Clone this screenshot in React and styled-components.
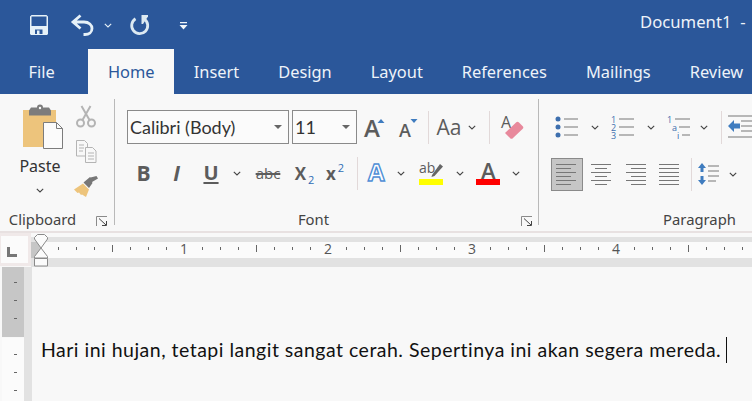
import React from 'react';
import styled, { createGlobalStyle } from 'styled-components';

const Global = createGlobalStyle`
  html, body { margin: 0; padding: 0; background: #f8f8f8; }
  body { width: 752px; height: 401px; overflow: hidden; font-family: "Noto Sans", "Open Sans", sans-serif; }
  svg { overflow: visible; }
`;
const Shell = styled.div`width: 752px; height: 401px; overflow: hidden; display: flex; flex-direction: column;`;
const TitleBar = styled.header`height: 49px; background: #2b579a; display: flex; align-items: center; flex: none;`;
const Qat = styled.div`display: flex; align-items: center; padding-left: 29px;`;
const QatIcon = styled.svg`display: block; flex: none; margin-left: ${p => p.$ml || 0}px; margin-top: ${p => p.$mt || 0}px;`;
const DocTitle = styled.div`margin-left: auto; width: 112px; overflow: hidden; white-space: pre; color: #eef3f9; font-size: 16.7px; line-height: 22px; margin-top: -5px;`;
const TabBar = styled.nav`height: 45px; background: #2b579a; display: flex; padding-left: 9px; flex: none;`;
const Tab = styled.div`
  display: flex; align-items: center; justify-content: center; flex: none; white-space: nowrap;
  font-size: 16.4px; padding: 0 19.5px; margin-right: ${p => p.$mr || 0}px; padding-bottom: 1px;
  color: ${p => p.$active ? '#2b579a' : '#eef3f9'};
  background: ${p => p.$active ? '#f8f8f8' : 'transparent'};
  ${p => p.$active ? 'width: 86px; padding: 0 0 1px;' : ''}
`;
const Ribbon = styled.section`height: 139px; flex: none; box-sizing: border-box; background: #f8f8f8; border-bottom: 2px solid #e8e1e1; padding-top: 5px; display: flex;`;
const Group = styled.div`width: ${p => p.$w}px; height: 126px; flex: none; box-sizing: border-box; border-right: 1px solid ${p => p.$noBorder ? 'transparent' : '#b9b9b9'}; display: flex; flex-direction: column;`;
const GroupBody = styled.div`height: 108px; flex: none; box-sizing: border-box; padding-left: ${p => p.$pl || 0}px; display: ${p => p.$row ? 'flex' : 'block'};`;
const GroupFoot = styled.div`height: 18px; flex: none; display: flex; align-items: center;`;
const GroupLabel = styled.div`flex: 1; text-align: center; font-size: 14.8px; line-height: 18px; color: #444; margin-top: 5px; height: 18px;`;
const Launcher = styled.svg`display: block; flex: none; margin-left: ${p => p.$ml}px; margin-top: 10px; margin-right: ${p => p.$mr}px;`;
const PasteCol = styled.div`width: 60px; margin-left: 10px; flex: none; display: flex; flex-direction: column; align-items: center;`;
const PasteIcon = styled.svg`display: block; margin-top: 5px; margin-left: 5px;`;
const PasteText = styled.div`font-size: 16px; line-height: 20px; color: #333; margin-top: 6px;`;
const SideCol = styled.div`width: 32px; flex: none; display: flex; flex-direction: column; align-items: center;`;
const SideCell = styled.div`height: 35px; display: flex; align-items: center; justify-content: center;`;
const Row = styled.div`display: flex; align-items: center; height: ${p => p.$h || 34}px; margin-top: ${p => p.$mt || 0}px;`;
const ComboBox = styled.div`
  box-sizing: border-box; width: ${p => p.$w}px; height: 34px; border: 1px solid #8a8a8a; background: #fbfbfb; flex: none;
  display: flex; align-items: center; justify-content: space-between; padding: 0 6px 0 2px; margin-right: 3px;
  font-family: Lato, "Noto Sans", sans-serif; font-size: 18px; color: #333;
`;
const Caret = styled.span`width: 0; height: 0; border-left: 4px solid transparent; border-right: 4px solid transparent; border-top: 4px solid #666;`;
const Cell = styled.div`
  width: ${p => p.$w}px; height: ${p => p.$h || 34}px; flex: none; display: flex; align-items: center; justify-content: center; box-sizing: border-box;
  ${p => p.$sel ? 'background:#c6c6c6;border:1px solid #8a8a8a;' : ''}
`;
const Sep = styled.div`width: 1px; height: 33px; background: #e2d9d9; flex: none; margin: 0 ${p => p.$r || 0}px 0 ${p => p.$l || 0}px;`;
const Letter = styled.span`
  font-family: "Open Sans", "Noto Sans", sans-serif; color: #5c5c5c; font-size: ${p => p.$size || 18}px; line-height: 1;
  font-weight: ${p => p.$bold ? 700 : 400}; font-style: ${p => p.$italic ? 'italic' : 'normal'};
  text-decoration: ${p => p.$deco || 'none'}; text-decoration-thickness: 2px; text-underline-offset: 2px;
`;
const Gap = styled.span`width: ${p => p.$w}px; flex: none;`;
const SubMark = styled.span`color: #2f6db5; font-size: 11px; line-height: 1; position: relative; top: ${p => p.$top}px; margin-left: 2px; font-family: "Open Sans", sans-serif;`;
const RulerRow = styled.div`height: 34px; flex: none; display: flex; background: #f8f8f8;`;
const Corner = styled.div`width: 31px; height: 33px; box-sizing: border-box; flex: none; background: #fbfbfb; border: 3px solid #f0e9e9; border-left-width: 1px; display: flex; align-items: center; justify-content: center; padding: 4px 5px 0 0;`;
const HRuler = styled.div`position: relative; flex: 1; margin-top: 4px; height: 30px; background: #e2e2e2; padding-top: 5px; box-sizing: border-box;`;
const HBand = styled.svg`display: block; width: 721px; height: 16px; background: #fbfbfb;`;
const IndentMark = styled.svg`position: absolute; left: 3px; top: -3px; display: block;`;
const Work = styled.div`flex: 1; display: flex; min-height: 0;`;
const VRuler = styled.div`width: 32px; flex: none; box-sizing: border-box; padding-left: 2px; border-right: 8px solid #e2e2e2; display: flex; flex-direction: column; gap: 1px; background: #f8f8f8;`;
const VBlock = styled.div`
  flex: none; height: ${p => p.$h}px; background: ${p => p.$dark ? '#c6c6c6' : '#fbfbfb'}; padding: ${p => p.$pt}px 0 0 4px; box-sizing: border-box;
  display: flex; flex-direction: column; align-items: center;
`;
const VDash = styled.div`height: 18px; flex: none; display: flex; align-items: center; justify-content: center; &::before { content: ""; width: 3px; height: 1px; background: #666; }`;
const Page = styled.main`flex: 1; background: #f8f8f8; padding: 70px 0 0 9px; display: flex; align-items: flex-start;`;
const Line = styled.p`margin: 0; white-space: pre; font-family: Lato, "Noto Sans", sans-serif; font-size: 19.5px; letter-spacing: 0.49px; line-height: 26px; color: #111; display: flex; align-items: center;`;
const Cursor = styled.span`display: block; width: 1px; height: 26px; background: #111; margin-left: 5px;`;
const IconText = styled.text`font-family: "Open Sans", sans-serif;`;

const Chev = ({ c = '#444' }) => (
  <svg width="8" height="5" viewBox="0 0 8 5"><path d="M.8.8 4 4 7.2.8" fill="none" stroke={c} strokeWidth="1.1" /></svg>
);
const LaunchIcon = ({ ml, mr }) => (
  <Launcher $ml={ml} $mr={mr} width="12" height="11" viewBox="0 0 12 11">
    <path d="M.5 10V.5H11" fill="none" stroke="#8a8a8a" /><path d="M3 2.5l7 6.5M10.5 5v4.5H6" fill="none" stroke="#444" />
  </Launcher>
);
const Lines = ({ rows, w = 22 }) => (
  <svg width={w} height="22" viewBox={`0 0 ${w} 22`}>
    {rows.map(([a, b], i) => <path key={i} d={`M${a} ${1.5 + i * 4}H${b}`} stroke="#777" strokeWidth="1" />)}
  </svg>
);
const gA = '#5c5c5c';
const bl = '#3d6fae';

export default function App() {
  return (
    <Shell>
      <Global />
      <TitleBar>
        <Qat>
          <QatIcon width="20" height="20" viewBox="0 0 20 20">
            <path fillRule="evenodd" d="M1 1.500 2.500 0h15L19 1.500V19l-1 1H2l-1-1ZM2.500 1.500v9.500h15V1.500ZM6 14.500V19h7.500v-4.500Z" fill="#e6f1f8" />
            <rect x="8" y="15.500" width="2.500" height="3.500" fill="#e6f1f8" />
          </QatIcon>
          <QatIcon $ml={22} width="24" height="22" viewBox="0 0 24 22">
            <path d="M9.500 1.500 2 8l7.500 6.500M3 8h10c5 0 8 3 8 6.500s-3 6-7 6h-1.500" fill="none" stroke="#e6f1f8" strokeWidth="2.8" />
          </QatIcon>
          <QatIcon $ml={9} $mt={2} width="8" height="5" viewBox="0 0 8 5"><path d="M.8.8 4 4 7.2.8" fill="none" stroke="#e6f1f8" strokeWidth="1.1" /></QatIcon>
          <QatIcon $ml={18} width="20" height="22" viewBox="0 0 20 22">
            <path d="M5.500 4.800a8 8 0 1 0 9 .4" fill="none" stroke="#dce9f2" strokeWidth="2.8" />
            <path d="M11.500 1H18v1.500L13 10h-1.500Z" fill="#dce9f2" />
          </QatIcon>
          <QatIcon $ml={29} $mt={3} width="9" height="8" viewBox="0 0 9 8"><path d="M1 0h7v1.200H1ZM.5 3h8L4.500 7.500Z" fill="#f2f6fa" /></QatIcon>
        </Qat>
        <DocTitle>{'Document1  -'}</DocTitle>
      </TitleBar>
      <TabBar>
        <Tab $mr={14}>File</Tab>
        <Tab $active>Home</Tab>
        <Tab>Insert</Tab>
        <Tab>Design</Tab>
        <Tab>Layout</Tab>
        <Tab>References</Tab>
        <Tab>Mailings</Tab>
        <Tab>Review</Tab>
      </TabBar>
      <Ribbon>
        <Group $w={115}>
          <GroupBody $row>
            <PasteCol>
              <PasteIcon width="42" height="46" viewBox="0 0 42 46">
                <rect x="1" y="6" width="33" height="37" fill="#edc47c" />
                <path d="M7 6.500 9 3.500h6a3 3 0 0 1 6 0h6l2 3v5H7Z" fill="#7c7c7c" />
                <circle cx="18" cy="4" r="1.200" fill="#f8f8f8" />
                <path d="M21.500 18.500h13l6 6v20h-19Z" fill="#fbfbfb" stroke="#7c7c7c" />
                <path d="M34.500 18.500v6h6" fill="none" stroke="#7c7c7c" />
              </PasteIcon>
              <PasteText>Paste</PasteText>
              <Row $h={14} $mt={7}><Chev /></Row>
            </PasteCol>
            <SideCol>
              <SideCell>
                <svg width="20" height="23" viewBox="0 0 20 23">
                  <g fill="none" stroke="#b4b4b4" strokeWidth="2">
                    <circle cx="4.500" cy="18" r="3.500" /><circle cx="15.500" cy="18" r="3.500" />
                    <path d="M6.500 15 14.500 1M13.500 15 5.500 1" />
                  </g>
                </svg>
              </SideCell>
              <SideCell>
                <svg width="21" height="23" viewBox="0 0 21 23">
                  <g fill="#f8f8f8" stroke="#b4b4b4">
                    <path d="M.5.5h8l3 3V16H.5Z" /><path d="M9.500 7.500h7l3.500 3.500V22.500H9.500Z" />
                    <path d="M3 5h5M3 8h5M3 11h4M12 13h6M12 16h6M12 19h6" fill="none" />
                  </g>
                </svg>
              </SideCell>
              <SideCell>
                <svg width="24" height="22" viewBox="0 0 24 22">
                  <path d="M0 13.500 9 7.500l6 6-3 7.500-4-2.500-1 .5-2-2.500-1.500.5Z" fill="#edc47c" />
                  <path d="M9.500 6.500 16 1l1 1-.5-.5L22.500 0 24 2.500l-6 3.500.5 1-3.500 5Z" fill="#777" />
                </svg>
              </SideCell>
            </SideCol>
          </GroupBody>
          <GroupFoot><GroupLabel>Clipboard</GroupLabel><LaunchIcon ml={11} mr={6} /></GroupFoot>
        </Group>
        <Group $w={424}>
          <GroupBody $pl={12}>
            <Row $mt={11}>
              <ComboBox $w={162}>Calibri (Body)<Caret /></ComboBox>
              <ComboBox $w={65}>11<Caret /></ComboBox>
              <Cell $w={30}>
                <svg width="22" height="24" viewBox="0 0 22 24">
                  <IconText x="0" y="22" fontSize="24" fontWeight="600" fill={gA}>A</IconText><path d="M13.500 8 17 4l3.500 4Z" fill="#3f7cbf" />
                </svg>
              </Cell>
              <Cell $w={36}>
                <svg width="22" height="24" viewBox="0 0 22 24">
                  <IconText x="2" y="22" fontSize="18" fontWeight="600" fill={gA}>A</IconText><path d="M13.500 4h7L17 8Z" fill="#3f7cbf" />
                </svg>
              </Cell>
              <Sep $l={2} />
              <Cell $w={55}>
                <Letter $size={21}>Aa</Letter><Gap $w={7} /><Chev />
              </Cell>
              <Sep $l={5} />
              <Cell $w={44}>
                <svg width="22" height="26" viewBox="0 0 22 26">
                  <IconText x="0" y="14" fontSize="16" fill={gA}>A</IconText>
                  <path d="M4 19 15 8.500a2 2 0 0 1 3 0l3.500 3.500a2 2 0 0 1 0 3L12 24a2 2 0 0 1-3 0Z" fill="#e8899c" />
                </svg>
              </Cell>
            </Row>
            <Row $mt={12}>
              <Cell $w={33}><Letter $bold $size={21}>B</Letter></Cell>
              <Cell $w={33}><Letter $italic $bold $size={21}>I</Letter></Cell>
              <Cell $w={36}><Letter $size={20} $bold $deco="underline">U</Letter></Cell>
              <Cell $w={16}><Chev /></Cell>
              <Cell $w={46}><Letter $size={15} $deco="line-through">abc</Letter></Cell>
              <Cell $w={27}><Letter $bold $size={17}>X</Letter><SubMark $top={6}>2</SubMark></Cell>
              <Cell $w={34}><Letter $bold $size={17}>x</Letter><SubMark $top={-6}>2</SubMark></Cell>
              <Sep $l={5} />
              <Cell $w={38}>
                <svg width="24" height="26" viewBox="0 0 24 26">
                  <IconText x="3" y="21" fontSize="24" fontWeight="700" fill="#fff" stroke="#4f8ed6" strokeWidth="1.400">A</IconText>
                </svg>
              </Cell>
              <Cell $w={10}><Chev /></Cell>
              <Cell $w={50}>
                <svg width="24" height="24" viewBox="0 0 24 24">
                  <IconText x="0" y="12" fontSize="14" fill={gA}>ab</IconText>
                  <path d="M13 14 21 3l3 2.500-8.500 9.500-3 1Z" fill="#666" />
                  <rect y="18" width="24" height="6" fill="#ffff00" />
                </svg>
              </Cell>
              <Cell $w={8}><Chev /></Cell>
              <Cell $w={48}>
                <svg width="24" height="24" viewBox="0 0 24 24">
                  <IconText x="5" y="18" fontSize="22" fontWeight="600" fill={gA}>A</IconText>
                  <rect y="18" width="24" height="6" fill="#ff0000" />
                </svg>
              </Cell>
              <Cell $w={8}><Chev /></Cell>
            </Row>
          </GroupBody>
          <GroupFoot><GroupLabel>Font</GroupLabel><LaunchIcon ml={9} mr={5} /></GroupFoot>
        </Group>
        <Group $w={322} $noBorder>
          <GroupBody $pl={12}>
            <Row $mt={11}>
              <Cell $w={32}>
                <svg width="24" height="22" viewBox="0 0 24 22">
                  <g fill={bl}><circle cx="3" cy="3" r="2.500" /><circle cx="3" cy="11" r="2.500" /><circle cx="3" cy="19" r="2.500" /></g>
                  <path d="M9 3h14M9 11h14M9 19h14" stroke="#777" />
                </svg>
              </Cell>
              <Cell $w={24}><Chev /></Cell>
              <Cell $w={32}>
                <svg width="24" height="24" viewBox="0 0 24 24">
                  <IconText x="0" y="8" fontSize="9" fill={bl}>1</IconText>
                  <IconText x="0" y="16" fontSize="9" fill={bl}>2</IconText>
                  <IconText x="0" y="24" fontSize="9" fill={bl}>3</IconText>
                  <path d="M8 4h15M8 12h15M8 20h15" stroke="#777" />
                </svg>
              </Cell>
              <Cell $w={24}><Chev /></Cell>
              <Cell $w={32}>
                <svg width="24" height="24" viewBox="0 0 24 24">
                  <IconText x="0" y="8" fontSize="9" fill={bl}>1</IconText>
                  <IconText x="5" y="16" fontSize="9" fill={bl}>a</IconText>
                  <IconText x="10" y="24" fontSize="9" fill={bl}>i</IconText>
                  <path d="M8 4h15M12 12h11M15 20h8" stroke="#777" />
                </svg>
              </Cell>
              <Cell $w={18}><Chev /></Cell>
              <Sep $l={8} />
              <Cell $w={36}>
                <svg width="24" height="24" viewBox="0 0 24 24">
                  <path d="M0 1h24M13 6h11M13 11h11M13 16h11M0 22h24" stroke="#777" />
                  <path d="M0 11 6 5v3.500h6v5H6V17Z" fill="#3f7cbf" />
                </svg>
              </Cell>
            </Row>
            <Row $mt={13}>
              <Cell $w={32} $h={33} $sel><Lines rows={[[0, 20], [0, 15], [0, 20], [0, 15], [0, 20], [0, 15]]} /></Cell>
              <Cell $w={36}><Lines rows={[[1, 21], [5, 17], [1, 21], [5, 17], [1, 21], [5, 17]]} /></Cell>
              <Cell $w={32}><Lines rows={[[2, 22], [7, 22], [2, 22], [7, 22], [2, 22], [7, 22]]} /></Cell>
              <Cell $w={36}><Lines rows={[[1, 21], [1, 21], [1, 21], [1, 21], [1, 21], [1, 21]]} /></Cell>
              <Sep $l={4} />
              <Cell $w={32}>
                <svg width="21" height="24" viewBox="0 0 21 24">
                  <path d="M4 1 8 6H5.500v4h-3V6H0ZM4 23l4-5H5.500v-4h-3v4H0Z" fill="#3f7cbf" />
                  <path d="M10 4h11M10 9h11M10 14h11M10 19h8" stroke="#777" />
                </svg>
              </Cell>
              <Cell $w={18}><Chev /></Cell>
              <Sep $l={11} />
            </Row>
          </GroupBody>
          <GroupFoot><GroupLabel>Paragraph</GroupLabel></GroupFoot>
        </Group>
      </Ribbon>
      <RulerRow>
        <Corner>
          <svg width="10" height="10" viewBox="0 0 10 10"><path d="M0 0h3v7h7v3H0Z" fill="#777" /></svg>
        </Corner>
        <HRuler>
          <HBand viewBox="0 0 721 16">
            <rect x="0" y="0" width="9" height="16" fill="#c6c6c6" />
            {Array.from({ length: 40 }, (_, i) => i + 1).map(i => {
              const x = 9 + i * 18;
              if (i % 8 === 0) return null;
              return i % 4 === 0
                ? <path key={i} d={`M${x + 0.5} 3V10`} stroke="#666" />
                : <path key={i} d={`M${x + 0.5} 5V8`} stroke="#666" />;
            })}
            {[1, 2, 3, 4].map(n => (
              <IconText key={n} x={9 + n * 144} y="12" fontSize="14" fill="#555" textAnchor="middle">{n}</IconText>
            ))}
          </HBand>
          <IndentMark width="14" height="33" viewBox="0 0 14 33">
            <path d="M.5 3.500 3.500.5h7l3 3V5L7 14 .5 5ZM7 14l6.500 8.500V24H.5v-1.500ZM.5 24.500h13V32H.5Z" fill="#fbfbfb" stroke="#8a8a8a" />
          </IndentMark>
        </HRuler>
      </RulerRow>
      <Work>
        <VRuler>
          <VBlock $h={70} $dark $pt={6}><VDash /><VDash /><VDash /></VBlock>
          <VBlock $h={70} $pt={7}><VDash /><VDash /><VDash /></VBlock>
        </VRuler>
        <Page>
          <Line>Hari ini hujan, tetapi langit sangat cerah. Sepertinya ini akan segera mereda.<Cursor /></Line>
        </Page>
      </Work>
    </Shell>
  );
}
